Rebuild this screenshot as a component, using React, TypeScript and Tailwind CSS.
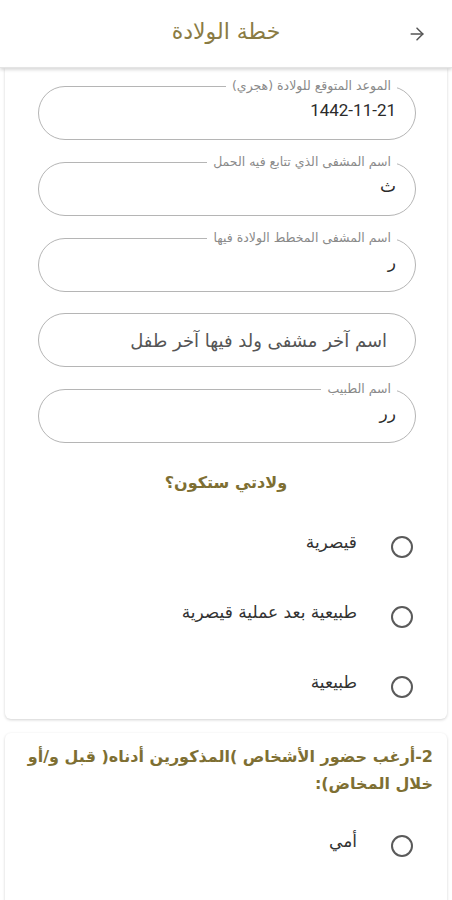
import { ArrowRight } from "lucide-react";

const fields = [
  { label: "الموعد المتوقع للولادة (هجري)", value: "1442-11-21" },
  { label: "اسم المشفى الذي تتابع فيه الحمل", value: "ث" },
  { label: "اسم المشفى المخطط الولادة فيها", value: "ر" },
  { label: "", value: "", placeholder: "اسم آخر مشفى ولد فيها آخر طفل" },
  { label: "اسم الطبيب", value: "رر" },
];

const birthTypes = ["قيصرية", "طبيعية بعد عملية قيصرية", "طبيعية"];

function Field({ label, value, placeholder }: { label: string; value: string; placeholder?: string }) {
  if (!label) {
    return (
      <div className="mt-[6px] h-[54px] rounded-full border border-[#b5b5b5] flex items-center pr-[28px]">
        <span className="text-[18px] text-[#555]">{placeholder}</span>
      </div>
    );
  }
  return (
    <fieldset className="rounded-[27px] border border-[#b5b5b5]">
      <legend className="text-[12.5px] leading-[14px] text-[#8a8a8a] mr-[18px] px-[6px]">{label}</legend>
      <div className="h-[46px] pr-[19px] pl-4 flex items-center">
        <span className="text-[17px] text-[#2b2b2b] -mt-[10px] font-['Roboto','DejaVu_Sans',sans-serif]">{value}</span>
      </div>
    </fieldset>
  );
}

function Radio({ label }: { label: string }) {
  return (
    <div className="flex items-center h-[70px] pr-[34px]">
      <span className="w-[22px] h-[22px] rounded-full border-2 border-[#5a5a5a] shrink-0" />
      <span className="mr-[34px] text-[17px] text-[#333] -mt-[8px]">{label}</span>
    </div>
  );
}

export default function App() {
  return (
    <div dir="rtl" className="min-h-screen bg-white" style={{ fontFamily: '"DejaVu Sans", sans-serif' }}>
      <header className="h-[68px] flex items-center relative shadow-[0_2px_3px_rgba(0,0,0,0.15)] border-b border-[#e4e4e4]">
        <ArrowRight className="absolute right-[25px] top-[24px] w-[20px] h-[20px] text-[#555]" strokeWidth={1.8} />
        <h1 className="w-full text-center text-[22px] text-[#8a7b43] -mt-[4px]">خطة الولادة</h1>
      </header>

      <div className="mx-[5px] rounded-b-[6px] shadow-[0_1px_3px_rgba(0,0,0,0.18)] pt-[11px] pb-[1px]">
        <div className="flex flex-col gap-[15px] pr-[31px] pl-[33px]">
          {fields.map((f, i) => (
            <Field key={i} {...f} />
          ))}
        </div>
        <h2 className="text-center text-[16px] font-bold text-[#7e6f33] mt-[28px] mb-[17px]">ولادتي ستكون؟</h2>
        {birthTypes.map((t, i) => (
          <div key={t} className={i === birthTypes.length - 1 ? "-mb-[4px]" : ""}>
            <Radio label={t} />
          </div>
        ))}
      </div>

      <div className="mx-[5px] mt-[14px] rounded-t-[6px] shadow-[0_1px_3px_rgba(0,0,0,0.18)] pt-[10px]">
        <h2 className="text-[16px] font-bold text-[#7e6f33] leading-[27px] pr-[14px] pl-[20px]">
          2-أرغب حضور الأشخاص )المذكورين أدناه( قبل و/أو خلال المخاض):
        </h2>
        <div className="mt-[14px]">
          <Radio label="أمي" />
        </div>
        <div className="h-[60px]" />
      </div>
    </div>
  );
}
